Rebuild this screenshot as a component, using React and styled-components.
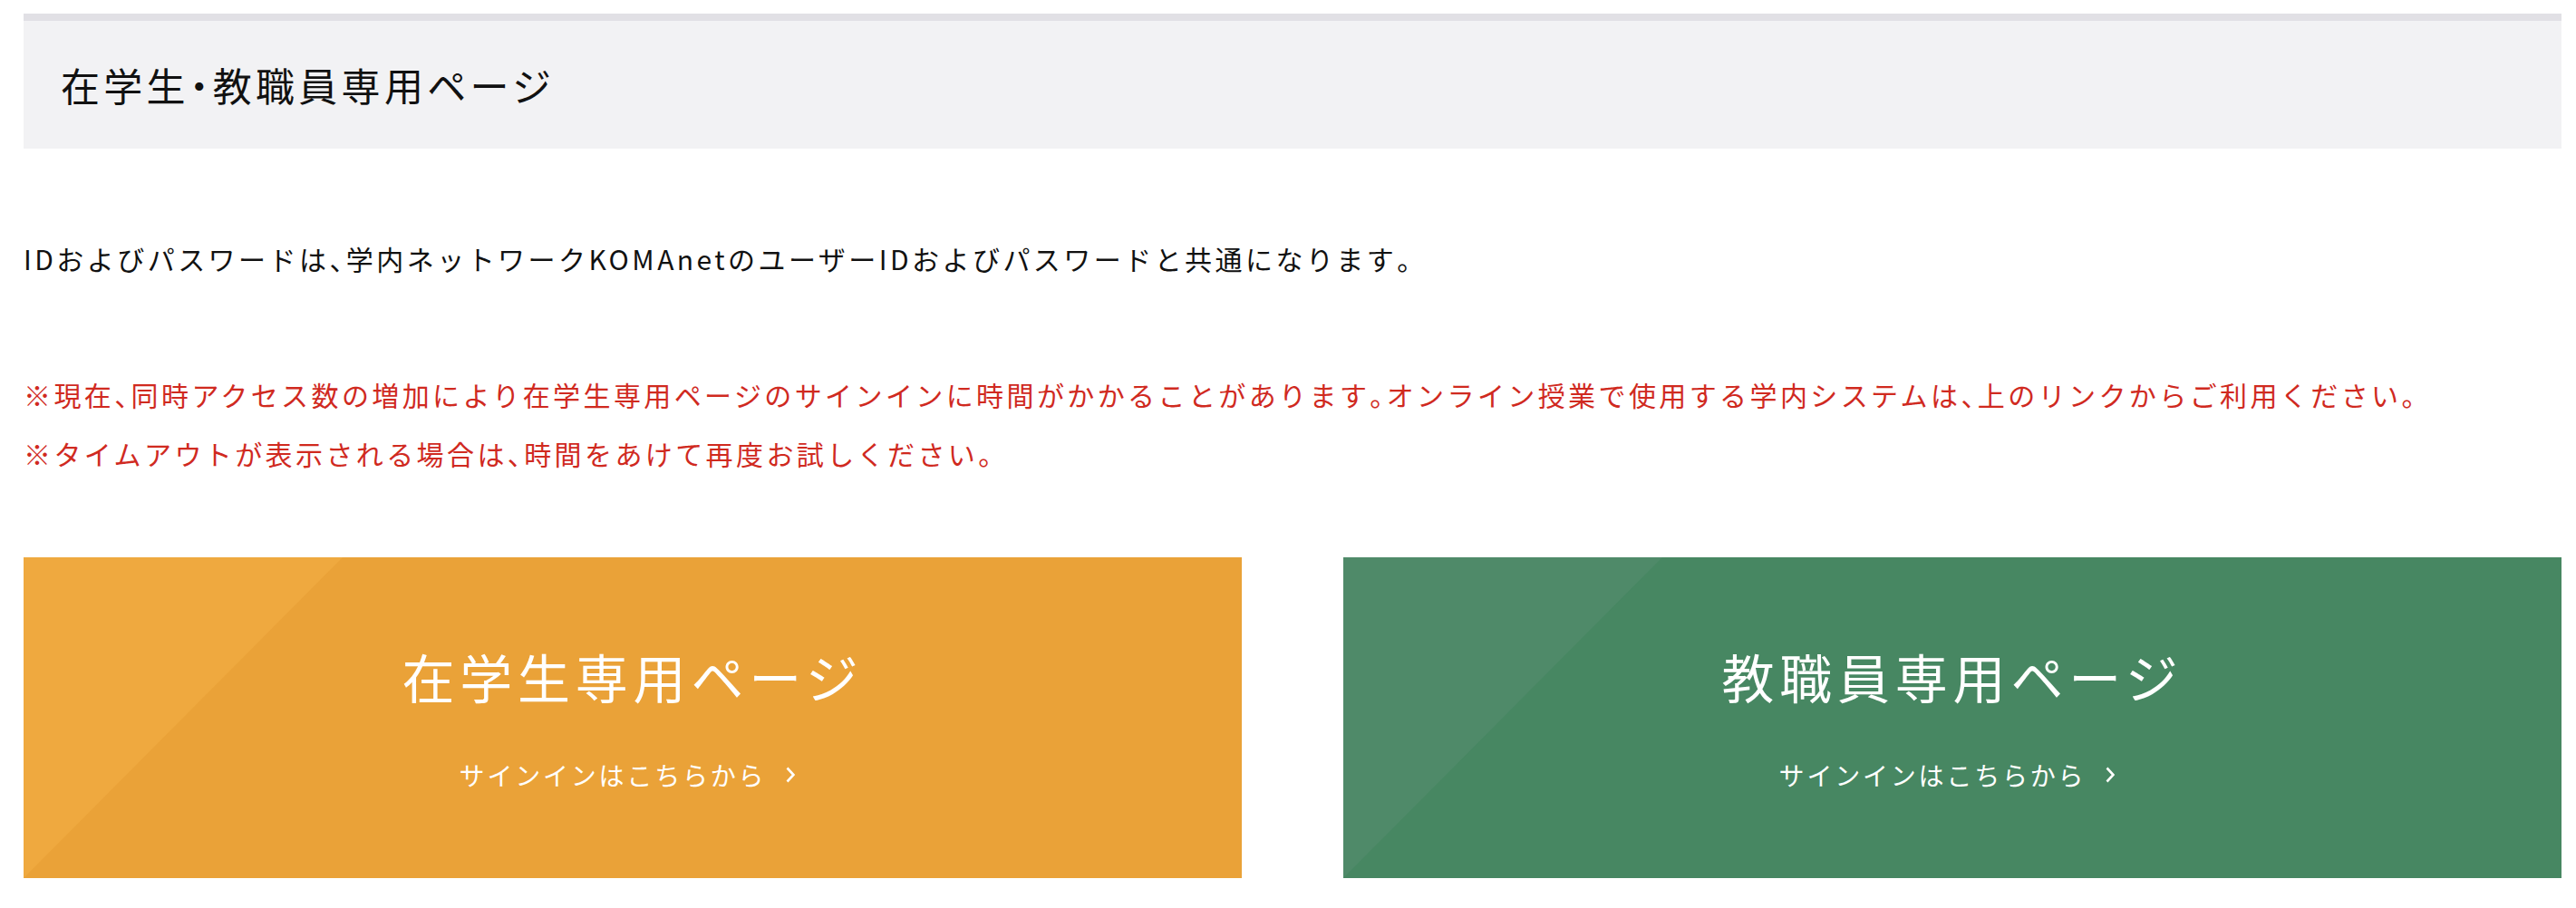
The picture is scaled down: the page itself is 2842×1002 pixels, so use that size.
import React from 'react'
import styled, {createGlobalStyle} from 'styled-components'

const GlobalStyle = createGlobalStyle`
  body {
    margin: 0;
    background: #fff;
    font-family: "Noto Sans CJK JP", "Noto Sans", sans-serif;
    color: #111;
  }
`

const portals = [
  {title: '在学生専用ページ', base: '#eaa238', light: '#efa93f'},
  {title: '教職員専用ページ', base: '#478762', light: '#4f8a69'}
]

// punctuation is set half-width in the original
const trim = text =>
  text.split(/([、。・])/).map((part, i) =>
    /^[、。・]$/.test(part) ? <Punct key={i}>{part}</Punct> : part
  )

const Chevron = () => (
  <svg width="10" height="18" viewBox="0 0 10 18">
    <polyline points="1.5,1.5 8.5,9 1.5,16.5" fill="none" stroke="#fff" strokeWidth="2.6" />
  </svg>
)

export default function App() {
  return (
    <>
      <GlobalStyle />
      <Page>
        <Header>
          <Title>{trim('在学生・教職員専用ページ')}</Title>
        </Header>

        <Lead>
          {trim('IDおよびパスワードは、学内ネットワークKOMAnetのユーザーIDおよびパスワードと共通になります。')}
        </Lead>

        <Notice>
          {trim('※現在、同時アクセス数の増加により在学生専用ページのサインインに時間がかかることがあります。オンライン授業で使用する学内システムは、上のリンクからご利用ください。')}
          <br />
          {trim('※タイムアウトが表示される場合は、時間をあけて再度お試しください。')}
        </Notice>

        <Cards>
          {portals.map(p => (
            <Card key={p.title} href="#" base={p.base} light={p.light}>
              <CardTitle>{p.title}</CardTitle>
              <CardLink>
                サインインはこちらから
                <Chevron />
              </CardLink>
            </Card>
          ))}
        </Cards>
      </Page>
    </>
  )
}

const Page = styled.div`
  padding: 15px 16px 0 26px;
`

const Punct = styled.span`
  font-feature-settings: 'halt' 1;
`

const Header = styled.div`
  display: flex;
  align-items: center;
  height: 141px;
  padding-left: 41px;
  background: #f2f2f4;
  border-top: 8px solid #e1e0e5;
`

const Title = styled.h1`
  margin: 0;
  font-size: 43px;
  font-weight: 400;
  letter-spacing: 0.1em;
  line-height: 1;
`

const Lead = styled.p`
  margin: 89px 0 0;
  font-size: 30px;
  line-height: 65px;
  letter-spacing: 3.45px;
`

const Notice = styled.p`
  margin: 85px 0 0;
  font-size: 30px;
  line-height: 65px;
  letter-spacing: 3.4px;
  color: #d02a1f;
`

const Cards = styled.div`
  display: flex;
  justify-content: space-between;
  margin-top: 82px;
`

const Card = styled.a`
  position: relative;
  overflow: hidden;
  width: 48%;
  height: 354px;
  box-sizing: border-box;
  padding-top: 91px;
  display: flex;
  flex-direction: column;
  align-items: center;
  text-decoration: none;
  color: #fff;
  background: ${p => p.base};

  &::before {
    content: '';
    position: absolute;
    inset: 0;
    background: ${p => p.light};
    clip-path: polygon(0 0, 352px 0, 0 100%);
  }

  & > * {
    position: relative;
  }
`

const CardTitle = styled.div`
  font-size: 58px;
  line-height: 80px;
  letter-spacing: 0.1em;
  margin-bottom: 49px;
`

const CardLink = styled.div`
  display: flex;
  align-items: center;
  gap: 22px;
  margin-right: 12px;
  font-size: 28px;
  line-height: 40px;
  letter-spacing: 0.1em;
`
